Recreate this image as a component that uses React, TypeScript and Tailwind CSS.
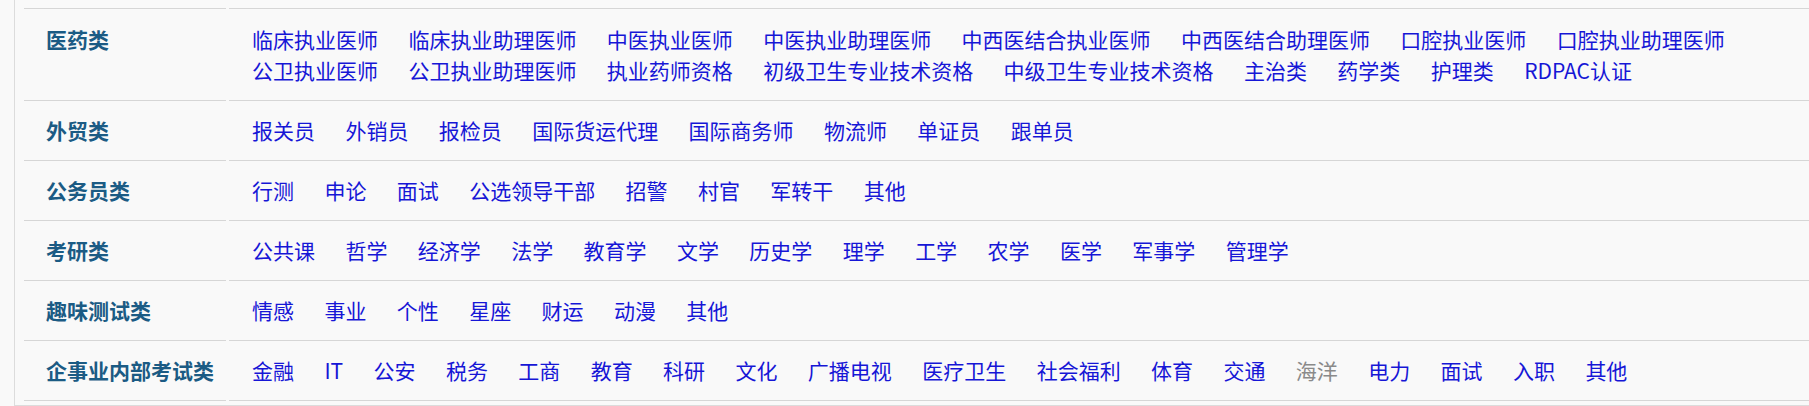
import React from "react";

type Item = { t: string; gray?: boolean };

const rows: { label: string; items: Item[] }[] = [
  {
    label: "医药类",
    items: [
      "临床执业医师",
      "临床执业助理医师",
      "中医执业医师",
      "中医执业助理医师",
      "中西医结合执业医师",
      "中西医结合助理医师",
      "口腔执业医师",
      "口腔执业助理医师",
      "公卫执业医师",
      "公卫执业助理医师",
      "执业药师资格",
      "初级卫生专业技术资格",
      "中级卫生专业技术资格",
      "主治类",
      "药学类",
      "护理类",
      "RDPAC认证",
    ].map((t) => ({ t })),
  },
  {
    label: "外贸类",
    items: ["报关员", "外销员", "报检员", "国际货运代理", "国际商务师", "物流师", "单证员", "跟单员"].map((t) => ({ t })),
  },
  {
    label: "公务员类",
    items: ["行测", "申论", "面试", "公选领导干部", "招警", "村官", "军转干", "其他"].map((t) => ({ t })),
  },
  {
    label: "考研类",
    items: ["公共课", "哲学", "经济学", "法学", "教育学", "文学", "历史学", "理学", "工学", "农学", "医学", "军事学", "管理学"].map(
      (t) => ({ t })
    ),
  },
  {
    label: "趣味测试类",
    items: ["情感", "事业", "个性", "星座", "财运", "动漫", "其他"].map((t) => ({ t })),
  },
  {
    label: "企事业内部考试类",
    items: [
      { t: "金融" },
      { t: "IT" },
      { t: "公安" },
      { t: "税务" },
      { t: "工商" },
      { t: "教育" },
      { t: "科研" },
      { t: "文化" },
      { t: "广播电视" },
      { t: "医疗卫生" },
      { t: "社会福利" },
      { t: "体育" },
      { t: "交通" },
      { t: "海洋", gray: true },
      { t: "电力" },
      { t: "面试" },
      { t: "入职" },
      { t: "其他" },
    ],
  },
];

export default function App() {
  return (
    <div
      className="w-[1809px] h-[406px] overflow-hidden bg-[#f9f9f9]"
      style={{ fontFamily: '"Noto Sans CJK SC", "Noto Sans", sans-serif' }}
    >
      <div className="ml-[14px] border-l border-b border-[#dcdcdc] pl-[9px] pb-[4px]">
        <div className="flex h-[9px]">
          <div className="w-[202px] border-b border-[#d6d6d6]" />
          <div className="w-[3px]" />
          <div className="flex-1 border-b border-[#d6d6d6]" />
        </div>
        {rows.map((r, idx) => (
          <div key={r.label} className="flex">
            <div
              className={`w-[202px] shrink-0 border-b border-[#d6d6d6] pl-[22px] pb-[14px] text-[21px] leading-[31px] font-bold text-[#1b5b84] ${
                idx === 0 ? "pt-[15px]" : "pt-[14px]"
              }`}
            >
              {r.label}
            </div>
            <div className="w-[3px] shrink-0" />
            <div
              className={`flex-1 border-b border-[#d6d6d6] pl-[23px] pb-[14px] ${idx === 0 ? "pt-[15px]" : "pt-[14px]"}`}
            >
              <div className="flex flex-wrap gap-x-[30.4px] text-[21px] leading-[31px]">
                {r.items.map((it, i) => (
                  <span key={i} className={it.gray ? "text-[#8a8a8a]" : "text-[#1616d6]"}>
                    {it.t}
                  </span>
                ))}
              </div>
            </div>
          </div>
        ))}
      </div>
    </div>
  );
}
